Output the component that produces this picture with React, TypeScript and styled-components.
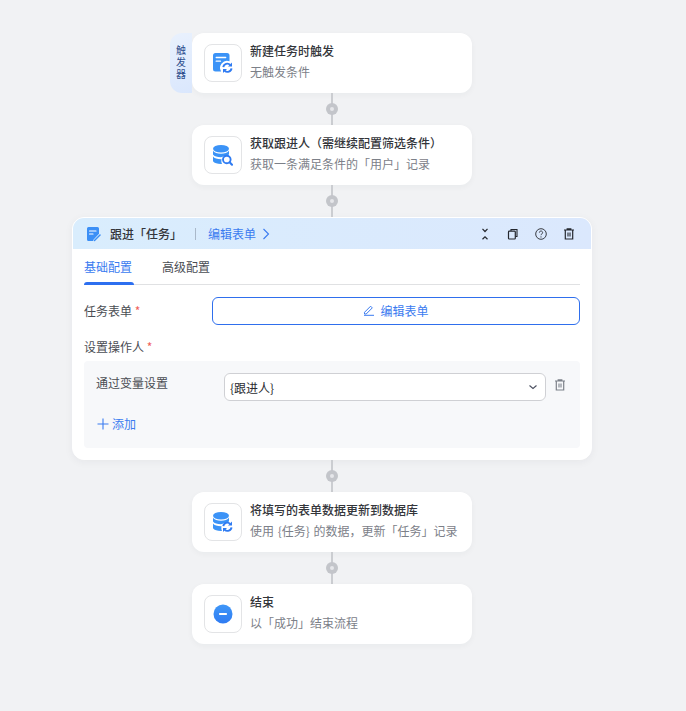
import React from 'react';
import styled, { createGlobalStyle } from 'styled-components';

const GlobalStyle = createGlobalStyle`
    html, body {
        margin: 0;
        padding: 0;
        background: #f1f2f4;
        font-family: "Noto Sans CJK SC", "Liberation Sans", sans-serif;
    }
`;

const SyncArrows = () => (
    <>
        <path d='M10.300 14.200a4 4 0 0 1 6.900-2.300M18.500 15.300a4 4 0 0 1-6.900 2.300' fill='none' stroke='#2f7bf2' strokeWidth='1.900' />
        <path d='M19 9.600v4h-4zM10 20v-4h4z' fill='#2f7bf2' />
    </>
);

const TaskIcon = () => (
    <svg width='20' height='21' viewBox='0 0 20 21'>
        <path d='M2.500 0h11.500a2.500 2.500 0 0 1 2.500 2.500v5.800a7 7 0 0 0-8.400 10.200H2.500A2.500 2.500 0 0 1 0 16V2.500A2.500 2.500 0 0 1 2.500 0z' fill='#3b93f7' />
        <path d='M3.200 4.500h9.500M3.200 8.200h4.300' stroke='#fff' strokeWidth='1.300' strokeLinecap='round' />
        <SyncArrows />
    </svg>
);

const Database = () => (
    <>
        <ellipse cx='8' cy='3.800' rx='8' ry='3.800' fill='#3b93f7' />
        <path d='M0 5.800c1.200 2 4.400 3 8 3s6.800-1 8-3v3.400c-.5.800-1.500 1.400-2.700 1.900a7 7 0 0 0-4.300 1c-.3 0-.7.100-1 .1-3.600 0-6.800-1-8-2.800z' fill='#3b93f7' />
        <path d='M0 11.400c1.200 1.800 4.400 2.800 8 2.800h.6c-.4 1.400-.3 3.200.4 4.700-.3 0-.7.100-1 .1-3.600 0-6.800-1-8-2.800z' fill='#3b93f7' />
    </>
);

const DbSearchIcon = () => (
    <svg width='20' height='21' viewBox='0 0 20 21'>
        <Database />
        <circle cx='13.800' cy='14.500' r='3.800' fill='#fff' stroke='#2f7bf2' strokeWidth='1.900' />
        <path d='M16.600 17.300L19 19.700' stroke='#2f7bf2' strokeWidth='2.100' strokeLinecap='round' />
    </svg>
);

const DbSyncIcon = () => (
    <svg width='20' height='21' viewBox='0 0 20 21'>
        <Database />
        <SyncArrows />
    </svg>
);

const EndIcon = () => (
    <svg width='20' height='20' viewBox='0 0 20 20'>
        <defs>
            <linearGradient id='endFill' x1='0' y1='0' x2='0' y2='1'>
                <stop offset='0' stopColor='#3f97f8' />
                <stop offset='1' stopColor='#2f7bf2' />
            </linearGradient>
        </defs>
        <circle cx='10' cy='10' r='9.500' fill='url(#endFill)' />
        <rect x='6' y='9' width='8' height='2' rx='.8' fill='#fff' />
    </svg>
);

const NoteIcon = () => (
    <svg width='15' height='16' viewBox='0 0 15 16'>
        <path d='M2.500 1h9A1.500 1.500 0 0 1 13 2.500v5.300L7.600 13.500 7 15H2.500A1.500 1.500 0 0 1 1 13.500v-11A1.500 1.500 0 0 1 2.500 1z' fill='#3b8ff6' />
        <path d='M3.500 5h6.500M3.500 8h3.500' stroke='#fff' strokeWidth='1.200' strokeLinecap='round' />
        <path d='M8.500 14.500l5.500-5.500' stroke='#3b8ff6' strokeWidth='1.500' strokeLinecap='round' />
    </svg>
);

const ChevronRight = () => (
    <svg width='10' height='12' viewBox='0 0 10 12'>
        <path d='M2.500 1l5 5-5 5' fill='none' stroke='#3a7bf0' strokeWidth='1.100' />
    </svg>
);

const CollapseIcon = () => (
    <svg width='14' height='14' viewBox='0 0 14 14'>
        <path d='M4.500 1.800L7 4.500l2.500-2.700M4.500 12.200L7 9.800l2.500 2.400' fill='none' stroke='#24272e' strokeWidth='1.200' />
    </svg>
);

const CopyIcon = () => (
    <svg width='14' height='14' viewBox='0 0 14 14'>
        <rect x='2.500' y='4.200' width='6.800' height='7.800' rx='.8' fill='none' stroke='#24272e' strokeWidth='1.200' />
        <path d='M5 4V2.500h6V9.500H9.500' fill='none' stroke='#24272e' strokeWidth='1.100' />
    </svg>
);

const HelpIcon = () => (
    <svg width='14' height='14' viewBox='0 0 14 14'>
        <circle cx='7' cy='7' r='5.300' fill='none' stroke='#3a3d44' strokeWidth='1' />
        <path d='M5.400 5.600a1.600 1.600 0 1 1 2.500 1.300c-.6.400-.9.700-.9 1.300' fill='none' stroke='#3a3d44' strokeWidth='1' />
        <circle cx='7' cy='9.900' r='.6' fill='#3a3d44' />
    </svg>
);

const TrashIcon = ({ color = '#24272e' }: { color?: string }) => (
    <svg width='14' height='14' viewBox='0 0 14 14'>
        <path d='M2 3h10M5.200 3V1.800h3.600V3M3.300 3v9h7.400V3' fill='none' stroke={color} strokeWidth='1.200' />
        <path d='M6 5.500v4M8 5.500v4' stroke={color} strokeWidth='1.100' />
    </svg>
);

const PenIcon = () => (
    <svg width='12' height='12' viewBox='0 0 12 12'>
        <path d='M1.500 8.300L7.600 2.200l1.700 1.700-6.100 6.100H1.500zM1 11.300h10' fill='none' stroke='#3a7bf0' strokeWidth='1' />
    </svg>
);

const ChevronDown = () => (
    <svg width='12' height='12' viewBox='0 0 12 12'>
        <path d='M2.500 4.500L6 7.500l3.500-3' fill='none' stroke='#4b5060' strokeWidth='1.100' />
    </svg>
);

const PlusIcon = () => (
    <svg width='12' height='12' viewBox='0 0 12 12'>
        <path d='M6 .5v11M.5 6h11' stroke='#3a7bf0' strokeWidth='1.100' />
    </svg>
);

const Connector = () => (
    <Link_>
        <Dot />
    </Link_>
);

type NodeProps = {
    icon: React.ReactNode;
    title: string;
    sub: string;
    trigger?: boolean;
};

const FlowNode = ({ icon, title, sub, trigger }: NodeProps) => (
    <NodeCard>
        {trigger && <TriggerTab>触发器</TriggerTab>}
        <IconBox>{icon}</IconBox>
        <NodeText>
            <NodeTitle>{title}</NodeTitle>
            <NodeSub>{sub}</NodeSub>
        </NodeText>
    </NodeCard>
);

export default function App() {
    return (
        <>
            <GlobalStyle />
            <Flow>
                <FlowNode trigger icon={<TaskIcon />} title='新建任务时触发' sub='无触发条件' />
                <Connector />
                <FlowNode icon={<DbSearchIcon />} title='获取跟进人（需继续配置筛选条件）' sub='获取一条满足条件的「用户」记录' />
                <Connector />
                <Editor>
                    <EditorHeader>
                        <NoteIcon />
                        <EditorTitle>跟进「任务」</EditorTitle>
                        <HeaderDivider />
                        <HeaderLink>
                            编辑表单
                            <ChevronRight />
                        </HeaderLink>
                        <HeaderTools>
                            <CollapseIcon />
                            <CopyIcon />
                            <HelpIcon />
                            <TrashIcon />
                        </HeaderTools>
                    </EditorHeader>
                    <EditorBody>
                        <Tabs>
                            <Tab $active>基础配置</Tab>
                            <Tab>高级配置</Tab>
                        </Tabs>
                        <FormRow>
                            <FieldLabel>
                                任务表单 <Required>*</Required>
                            </FieldLabel>
                            <OutlineButton>
                                <PenIcon />
                                编辑表单
                            </OutlineButton>
                        </FormRow>
                        <SectionLabel>
                            设置操作人 <Required>*</Required>
                        </SectionLabel>
                        <SubPanel>
                            <SubRow>
                                <SubLabel>通过变量设置</SubLabel>
                                <SelectBox>
                                    <span>{'{跟进人}'}</span>
                                    <ChevronDown />
                                </SelectBox>
                                <RowDelete>
                                    <TrashIcon color='#7d818a' />
                                </RowDelete>
                            </SubRow>
                            <AddButton>
                                <PlusIcon />
                                添加
                            </AddButton>
                        </SubPanel>
                    </EditorBody>
                </Editor>
                <Connector />
                <FlowNode icon={<DbSyncIcon />} title='将填写的表单数据更新到数据库' sub='使用 {任务} 的数据，更新「任务」记录' />
                <Connector />
                <FlowNode icon={<EndIcon />} title='结束' sub='以「成功」结束流程' />
            </Flow>
        </>
    );
}

const Flow = styled.div`
    width: 664px;
    height: 711px;
    box-sizing: border-box;
    padding-top: 33px;
    display: flex;
    flex-direction: column;
    align-items: center;
`;

const Link_ = styled.div`
    position: relative;
    width: 2px;
    height: 32px;
    background: #cbcdd1;
`;

const Dot = styled.div`
    position: absolute;
    top: 10px;
    left: -5px;
    width: 12px;
    height: 12px;
    border-radius: 50%;
    background: #c3c5ca;

    &::after {
        content: '';
        position: absolute;
        top: 4px;
        left: 4px;
        width: 4px;
        height: 4px;
        border-radius: 50%;
        background: #e6e7ea;
    }
`;

const NodeCard = styled.div`
    position: relative;
    width: 280px;
    height: 60px;
    box-sizing: border-box;
    padding: 0 12px;
    display: flex;
    align-items: center;
    gap: 8px;
    background: #fff;
    border-radius: 12px;
    box-shadow: 0 2px 6px rgba(30, 40, 60, 0.04);
`;

const TriggerTab = styled.div`
    position: absolute;
    top: 0;
    left: -22px;
    width: 22px;
    height: 60px;
    padding: 11px 6px 0;
    box-sizing: border-box;
    background: linear-gradient(160deg, #e9f1fd, #dae7fd);
    border-radius: 12px 0 0 12px;
    color: #2b4c8c;
    font-size: 10px;
    line-height: 12px;
    text-align: center;
`;

const IconBox = styled.div`
    width: 38px;
    height: 38px;
    flex: none;
    box-sizing: border-box;
    display: flex;
    align-items: center;
    justify-content: center;
    background: #fff;
    border: 1px solid #e3e4e6;
    border-radius: 8px;
`;

const NodeText = styled.div`
    display: flex;
    flex-direction: column;
    gap: 4px;
    margin: -1px 0 4px;
`;

const NodeTitle = styled.div`
    font-size: 12px;
    line-height: 17px;
    font-weight: 500;
    color: #33353a;
    white-space: nowrap;
`;

const NodeSub = styled.div`
    font-size: 12px;
    line-height: 17px;
    word-spacing: 1px;
    color: #7c8088;
    white-space: nowrap;
`;

const Editor = styled.div`
    width: 520px;
    height: 243px;
    box-sizing: border-box;
    background: #fff;
    border: 1px solid #fff;
    border-radius: 12px;
    box-shadow: 0 2px 8px rgba(30, 40, 60, 0.05);
    overflow: hidden;
`;

const EditorHeader = styled.div`
    height: 31px;
    padding: 0 15px 0 13px;
    display: flex;
    align-items: center;
    background: linear-gradient(90deg, #d9edfd, #dbe8fd);
`;

const EditorTitle = styled.span`
    margin-left: 9px;
    font-size: 12px;
    font-weight: 500;
    color: #33353a;
`;

const HeaderDivider = styled.span`
    width: 1px;
    height: 12px;
    margin: 0 12px 0 13px;
    background: #a9b8c9;
`;

const HeaderLink = styled.span`
    display: flex;
    align-items: center;
    gap: 5px;
    font-size: 12px;
    color: #3a7bf0;
`;

const HeaderTools = styled.div`
    margin-left: auto;
    display: flex;
    align-items: center;
    gap: 14px;
`;

const EditorBody = styled.div`
    padding: 0 11px;
`;

const Tabs = styled.div`
    height: 36px;
    box-sizing: border-box;
    display: flex;
    gap: 30px;
    border-bottom: 1px solid #e0e1e3;
`;

const Tab = styled.div<{ $active?: boolean }>`
    position: relative;
    width: 48px;
    padding-top: 9px;
    font-size: 12px;
    line-height: 17px;
    color: ${p => (p.$active ? '#3a7bf0' : '#4a4d53')};

    &::after {
        content: '';
        display: ${p => (p.$active ? 'block' : 'none')};
        position: absolute;
        left: 0;
        bottom: -1px;
        width: 50px;
        height: 3px;
        border-radius: 3px 3px 0 0;
        background: #2d6ff0;
    }
`;

const FormRow = styled.div`
    margin-top: 12px;
    display: flex;
    align-items: center;
`;

const FieldLabel = styled.div`
    width: 128px;
    flex: none;
    padding-bottom: 2px;
    font-size: 12px;
    color: #4a4d53;
`;

const Required = styled.span`
    color: #f0605a;
`;

const OutlineButton = styled.div`
    flex: 1;
    height: 28px;
    box-sizing: border-box;
    padding-bottom: 2px;
    display: flex;
    align-items: center;
    justify-content: center;
    gap: 5px;
    border: 1px solid #2f6fed;
    border-radius: 6px;
    font-size: 12px;
    color: #3a7bf0;
`;

const SectionLabel = styled.div`
    margin-top: 13px;
    font-size: 12px;
    line-height: 17px;
    color: #4a4d53;
`;

const SubPanel = styled.div`
    height: 87px;
    margin-top: 6px;
    padding: 12px 12px 0;
    box-sizing: border-box;
    background: #f7f8fa;
    border-radius: 4px;
`;

const SubRow = styled.div`
    display: flex;
    align-items: flex-start;
`;

const SubLabel = styled.div`
    width: 128px;
    flex: none;
    padding-top: 1px;
    font-size: 12px;
    line-height: 17px;
    color: #4a4d53;
`;

const SelectBox = styled.div`
    width: 322px;
    height: 28px;
    box-sizing: border-box;
    padding: 0 6px 0 5px;
    display: flex;
    align-items: center;
    justify-content: space-between;
    background: #fff;
    border: 1px solid #cfd0d4;
    border-radius: 6px;
    font-size: 12px;
    color: #2a2c31;
`;

const RowDelete = styled.div`
    margin: 5px 0 0 7px;
    line-height: 0;
`;

const AddButton = styled.div`
    margin: 14px 0 0 1px;
    display: flex;
    align-items: center;
    gap: 3px;
    font-size: 12px;
    line-height: 17px;
    color: #3a7bf0;
`;
